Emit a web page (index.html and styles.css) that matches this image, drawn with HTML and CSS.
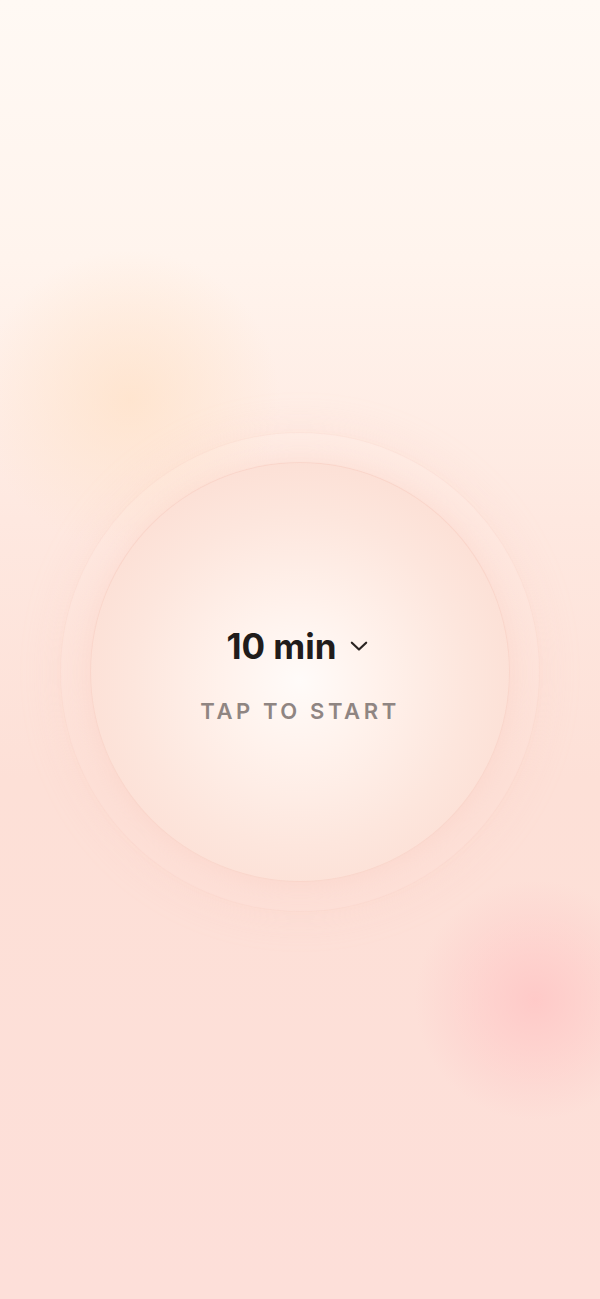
FILE: index.html
```html
<!DOCTYPE html>
<html lang="en">
<head>
<meta charset="utf-8">
<title>Timer</title>
<link rel="stylesheet" href="styles.css">
</head>
<body>
<main class="screen">
  <div class="ring">
    <button class="dial" type="button">
      <span class="duration">10 min
        <svg class="chevron" viewBox="0 0 20 20" width="22" height="22" aria-hidden="true">
          <path d="M3.5 7 L10 13.2 L16.5 7" fill="none" stroke="#2a2422" stroke-width="2" stroke-linecap="round" stroke-linejoin="round"/>
        </svg>
      </span>
      <span class="hint">TAP TO START</span>
    </button>
  </div>
</main>
</body>
</html>
```

FILE: styles.css
```css
html, body {
  margin: 0;
  padding: 0;
}
body {
  width: 600px;
  height: 1299px;
  overflow: hidden;
  font-family: Inter, "Noto Sans", sans-serif;
  background:
    radial-gradient(circle at 130px 400px, rgba(255, 226, 200, 0.75) 0, rgba(255, 226, 200, 0) 150px),
    radial-gradient(circle at 535px 1000px, rgba(255, 196, 196, 0.8) 0, rgba(255, 200, 200, 0) 120px),
    linear-gradient(180deg, #fff9f4 0%, #fff4ed 20%, #fee8e0 40%, #fde0d7 60%, #fddfd9 100%);
}
.screen {
  height: 1299px;
  display: flex;
  justify-content: center;
  align-items: flex-start;
  padding-top: 432px;
  box-sizing: border-box;
}
.ring {
  width: 480px;
  height: 480px;
  border-radius: 50%;
  display: flex;
  align-items: center;
  justify-content: center;
  border: 1px solid rgba(246, 196, 182, 0.22);
  box-sizing: border-box;
  background: radial-gradient(circle, rgba(252, 214, 200, 0) 80%, rgba(252, 214, 200, 0.3) 100%);
  box-shadow: 0 0 40px rgba(250, 200, 186, 0.22);
}
.dial {
  width: 420px;
  height: 420px;
  border-radius: 50%;
  border: 1px solid rgba(244, 190, 176, 0.3);
  padding: 0;
  margin: 0;
  display: flex;
  flex-direction: column;
  align-items: center;
  justify-content: center;
  gap: 36px;
  font-family: inherit;
  cursor: pointer;
  background: radial-gradient(circle at 50% 52%, #fffbf9 0%, #fff2ec 25%, #fde6dd 55%, #fbd7cb 100%);
  box-shadow: 0 0 30px rgba(248, 196, 180, 0.35);
}
.duration {
  display: flex;
  align-items: center;
  gap: 11px;
  font-size: 35px;
  font-weight: 700;
  letter-spacing: 0;
  color: #211c1b;
  line-height: 1;
  margin-top: 6px;
  margin-left: -4px;
}
.chevron {
  display: block;
}
.hint {
  font-size: 22px;
  font-weight: 600;
  letter-spacing: 3.6px;
  color: #8f8582;
  line-height: 1;
}
```
